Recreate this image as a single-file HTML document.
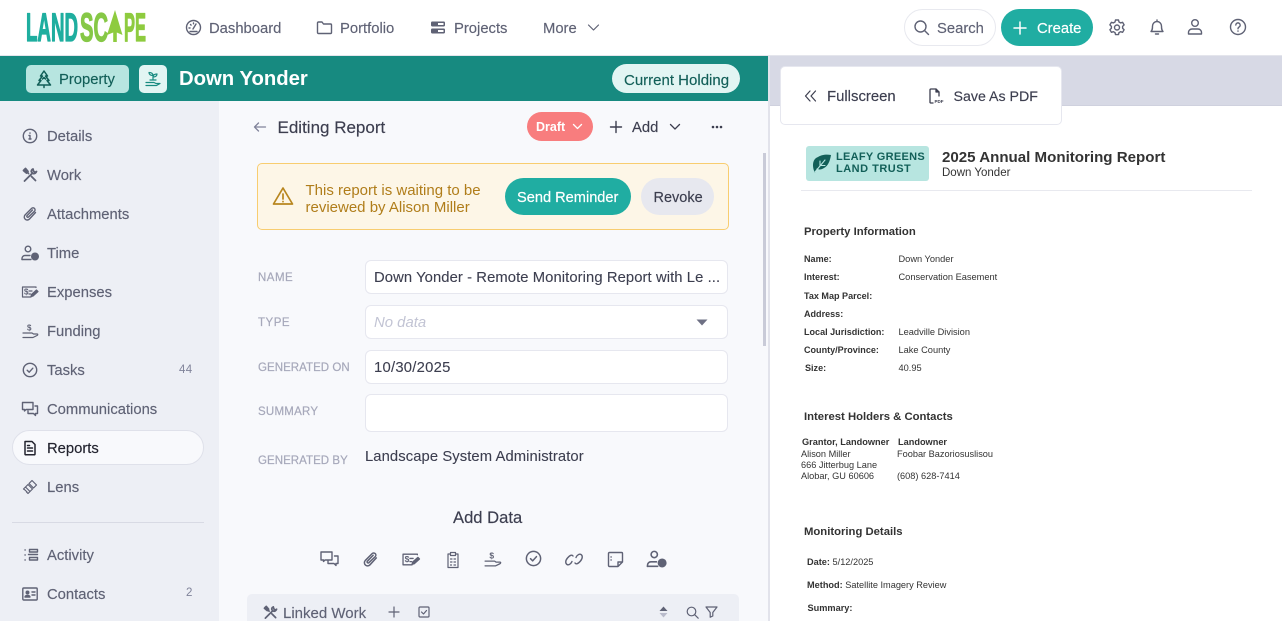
<!DOCTYPE html>
<html lang="en"><head><meta charset="utf-8"><title>Down Yonder - Editing Report</title>
<style>
html,body{margin:0;padding:0;width:1282px;height:621px;overflow:hidden;background:#fff;font-family:"Liberation Sans",Arial,sans-serif;}
#root{position:relative;width:1282px;height:621px;overflow:hidden;}
.b{position:absolute;box-sizing:border-box;}
.t{position:absolute;white-space:nowrap;line-height:1;margin-top:1px;}
svg{position:absolute;overflow:visible;fill:none;stroke-linecap:round;stroke-linejoin:round;}
.nav{font-size:14.8px;color:#5f6275;-webkit-text-stroke:.15px #5f6275;}
.side{font-size:14.8px;color:#5f6275;left:47px;-webkit-text-stroke:.15px #5f6275;}
.lab{font-size:11.5px;color:#a6a8ba;left:258px;letter-spacing:.5px;-webkit-text-stroke:.2px #a6a8ba;}
.inp{position:absolute;left:365px;width:363px;background:#fff;border:1px solid #e6e7ef;border-radius:6px;box-sizing:border-box;}
.val{font-size:14.8px;color:#3c3e4f;left:374px;letter-spacing:.08px;-webkit-text-stroke:.1px #3c3e4f;}
.rk{font-size:9.05px;color:#333;font-weight:bold;left:804px;}
.rv{font-size:9.25px;color:#333;left:898.5px;}
.rh{font-size:11.3px;color:#333;font-weight:bold;left:804px;}
.ct{font-size:9.2px;color:#333;}
.s{stroke:#5f6275;stroke-width:1.4;}
</style></head><body><div id="root">

<!-- top nav -->
<div class="b" style="left:0;top:0;width:1282px;height:56px;background:#fff;border-bottom:1px solid #e4e5ec;"></div>
<svg style="left:0;top:0" width="170" height="55">
<text x="26" y="41" font-family="Liberation Sans" font-weight="bold" font-size="40" textLength="52" lengthAdjust="spacingAndGlyphs" fill="#1fae9f" stroke="#1fae9f" stroke-width="1.300">LAND</text>
<text x="80" y="41" font-family="Liberation Sans" font-weight="bold" font-size="40" textLength="28" lengthAdjust="spacingAndGlyphs" fill="#86c846" stroke="#86c846" stroke-width="1.300">SC</text>
<text x="124" y="41" font-family="Liberation Sans" font-weight="bold" font-size="40" textLength="22" lengthAdjust="spacingAndGlyphs" fill="#8ecb3f" stroke="#8ecb3f" stroke-width="1.300">PE</text>
<path d="M115 10L122.500 35 116.800 32.500V42H113.200V32.500L107 35z" fill="#8ecb3f"/>
</svg>

<svg class="s" style="left:185px;top:19px" width="17" height="17" viewBox="0 0 17 17"><circle cx="8.500" cy="8.500" r="7"/><path d="M8 10l3-5M4 9h1M5.500 5.500l.6.6M8.500 4v.8M12 12.500H5"/></svg>
<div class="t nav" style="left:209px;top:21px;">Dashboard</div>
<svg class="s" style="left:316px;top:19px" width="17" height="17" viewBox="0 0 17 17"><path d="M1.500 4a1 1 0 0 1 1-1H6l1.500 2h7a1 1 0 0 1 1 1v7.500a1 1 0 0 1-1 1h-12a1 1 0 0 1-1-1z"/></svg>
<div class="t nav" style="left:340px;top:21px;">Portfolio</div>
<svg style="left:430px;top:20px" width="16" height="15" viewBox="0 0 16 15"><rect x="1" y="1.500" width="14" height="5" rx="1.200" fill="#5f6275"/><rect x="1" y="8.500" width="14" height="5" rx="1.200" fill="#5f6275"/><rect x="8" y="3" width="5.500" height="2" fill="#fff"/><rect x="8" y="10" width="5.500" height="2" fill="#fff"/></svg>
<div class="t nav" style="left:454px;top:21px;">Projects</div>
<div class="t nav" style="left:543px;top:21px;">More</div>
<svg class="s" style="left:587px;top:23px;stroke-width:1.200" width="13" height="11" viewBox="0 0 13 11"><path d="M1.500 2l5 5 5-5"/></svg>

<div class="b" style="left:904px;top:9px;width:92px;height:37px;border:1px solid #e8e9ef;border-radius:19px;background:#fff;"></div>
<svg class="s" style="left:913px;top:19px" width="17" height="17" viewBox="0 0 17 17"><circle cx="7.500" cy="7.500" r="5.500"/><path d="M11.500 11.500l4 4"/></svg>
<div class="t nav" style="left:937px;top:21px;">Search</div>
<div class="b" style="left:1001px;top:9px;width:92px;height:37px;border-radius:19px;background:#20ada2;"></div>
<svg style="left:1012px;top:20px;stroke:#fff;stroke-width:1.500" width="16" height="16" viewBox="0 0 16 16"><path d="M8 2v12M2 8h12"/></svg>
<div class="t" style="left:1037px;top:21px;font-size:14.8px;color:#fff;-webkit-text-stroke:.2px #fff;">Create</div>
<svg class="s" style="left:1108px;top:18px" width="18" height="18" viewBox="0 0 18 18"><path d="M7.500 2h3l.5 2 1.600.9 2-.6 1.500 2.600-1.500 1.500v1.800l1.500 1.500-1.500 2.600-2-.6-1.600.9-.5 2h-3l-.5-2-1.600-.9-2 .6-1.500-2.600 1.500-1.500V8.400L1.900 6.900l1.500-2.600 2 .6L7 4z"/><circle cx="9" cy="9.500" r="2.500"/></svg>
<svg class="s" style="left:1148px;top:18px" width="18" height="18" viewBox="0 0 18 18"><path d="M3 13.500c1.500-1.500 1.500-3 1.500-5.500a4.500 4.500 0 0 1 9 0c0 2.500 0 4 1.500 5.500zM7.500 16h3M9 2v1"/></svg>
<svg class="s" style="left:1186px;top:18px" width="18" height="18" viewBox="0 0 18 18"><circle cx="9" cy="5" r="3.300"/><path d="M2.500 16v-1.500a3.500 3.500 0 0 1 3.500-3.500h6a3.500 3.500 0 0 1 3.500 3.500V16z"/></svg>
<svg class="s" style="left:1229px;top:18px" width="18" height="18" viewBox="0 0 18 18"><circle cx="9" cy="9" r="7.500"/><path d="M6.800 7a2.200 2.200 0 1 1 3.300 2c-.8.500-1.100.9-1.100 1.800M9 13v.2"/></svg>

<!-- teal bar -->
<div class="b" style="left:0;top:56px;width:768px;height:45px;background:#178a80;"></div>
<div class="b" style="left:26px;top:65px;width:103px;height:28px;background:#b7e5e0;border-radius:5px;"></div>
<svg style="left:35px;top:70px;stroke:#125f58;stroke-width:1.500" width="18" height="18" viewBox="0 0 18 18"><path d="M9 1L5.500 6h2L4 10.500h2L2.500 15h13L12 10.500h2L10.500 6h2zM9 15v2.500M7.500 9l1.500-1.500L10.500 9"/></svg>
<div class="t" style="left:59px;top:71.500px;font-size:14.800px;color:#125f58;-webkit-text-stroke:.15px #125f58;">Property</div>
<div class="b" style="left:139px;top:65px;width:28px;height:28px;background:#e2f5f3;border-radius:5px;"></div>
<svg style="left:144px;top:70px;stroke:#178a80;stroke-width:1.200" width="18" height="18" viewBox="0 0 18 18"><path d="M9 10V5.500M9 5.500C9 3.500 7.500 2.500 5 2.500 5 4.500 6.500 5.500 9 5.500zM9 7c0-2 1.500-3 4-3 0 2-1.500 3-4 3zM6 10h6M2 12.500h8l2 1h3.500M2 15.500h10.500l3.500-2"/></svg>
<div class="t" style="left:179px;top:68px;font-size:20.300px;font-weight:bold;color:#fff;">Down Yonder</div>
<div class="b" style="left:612px;top:64px;width:128px;height:29px;background:#e2f5f3;border-radius:15px;"></div>
<div class="t" style="left:624px;top:71.500px;font-size:15px;color:#125f58;-webkit-text-stroke:.15px #125f58;">Current Holding</div>

<!-- sidebar -->
<div class="b" style="left:0;top:101px;width:219px;height:520px;background:#edeff5;"></div>
<div class="b" style="left:219px;top:101px;width:549px;height:520px;background:#f8f9fc;"></div>

<svg class="s" style="left:22px;top:128px" width="16" height="16" viewBox="0 0 16 16"><circle cx="8" cy="8" r="6.700"/><path d="M8 7.500v3.500M8 5v.2M7 7.500h1M7 11h2"/></svg>
<div class="t side" style="top:129px;">Details</div>
<svg style="left:22px;top:167px;stroke:#5f6275;stroke-width:1.800" width="16" height="16" viewBox="0 0 16 16"><path d="M2.500 2.500l4 4M9.500 9.500l4 4M2.500 14l7.500-7.500M11 2c-1.500.5-2 2-1.500 3l1.500 1.500c1.500.5 3-.5 3.500-2L13 5.500 11.500 4z"/><path d="M1.500 3.500l2-2 2.500 3-1.500 1.500z" fill="#5f6275"/></svg>
<div class="t side" style="top:168px;">Work</div>
<svg class="s" style="left:22px;top:206px" width="16" height="16" viewBox="0 0 16 16"><path d="M13.500 6.500l-6 6.500a3 3 0 0 1-4.500-4l6.500-6.500a2 2 0 0 1 3 2.800L6.500 11a1 1 0 0 1-1.500-1.300L10.500 4"/></svg>
<div class="t side" style="top:207px;">Attachments</div>
<svg class="s" style="left:21px;top:245px" width="18" height="16" viewBox="0 0 18 16"><circle cx="7" cy="4" r="2.800"/><path d="M1 14.500v-1a3 3 0 0 1 3-3h5"/><path d="M1 14.500h9"/><circle cx="14" cy="11.500" r="3.300" fill="#5f6275"/></svg>
<div class="t side" style="top:246px;">Time</div>
<svg class="s" style="left:21px;top:284px;stroke-width:1.200" width="18" height="16" viewBox="0 0 18 16"><path d="M15 3.500V3H1.500v10H10M11 7H8M9.500 10H8"/><path d="M15.500 6l1.500 1.500-5 4.500-2 .5.500-2z" fill="#5f6275"/><text x="3" y="10.500" font-size="8" font-family="Liberation Sans" font-weight="bold" fill="#5f6275" stroke="none">$</text></svg>
<div class="t side" style="top:285px;">Expenses</div>
<svg class="s" style="left:21px;top:323px;stroke-width:1.200" width="18" height="16" viewBox="0 0 18 16"><text x="6" y="7.500" font-size="8" font-family="Liberation Sans" font-weight="bold" fill="#5f6275" stroke="none">$</text><path d="M2 10h9l1.500 1H16c1 0 1 1 0 1.500L12 14.500H2"/></svg>
<div class="t side" style="top:324px;">Funding</div>
<svg class="s" style="left:22px;top:362px" width="16" height="16" viewBox="0 0 16 16"><circle cx="8" cy="8" r="6.700"/><path d="M5.200 8.200l2 2 3.600-4"/></svg>
<div class="t side" style="top:363px;">Tasks</div>
<div class="t" style="left:179px;top:364px;font-size:11.500px;color:#80839a;letter-spacing:.4px;">44</div>
<svg class="s" style="left:21px;top:401px" width="18" height="16" viewBox="0 0 18 16"><path d="M1.500 1.500h10.500v7H5l-1.500 1.500V8.500h-2zM14 5h2.500v7.500h-2v2L12.500 12.500H7V10"/></svg>
<div class="t side" style="top:402px;">Communications</div>

<div class="b" style="left:12px;top:430px;width:192px;height:35px;background:#f8f9fc;border:1px solid #dfe1ea;border-radius:18px;"></div>
<svg style="left:22px;top:440px;stroke:#23242f;stroke-width:1.500" width="16" height="16" viewBox="0 0 16 16"><path d="M3 1.500h7l3 3V14a.8.800 0 0 1-.8.800H3.800A.8.800 0 0 1 3 14zM5.500 8h5M5.500 11h5M5.500 5.500h2"/></svg>
<div class="t" style="left:47px;top:441px;font-size:14.8px;color:#23242f;-webkit-text-stroke:.15px #23242f;">Reports</div>

<svg class="s" style="left:22px;top:479px;stroke-width:1.200" width="16" height="16" viewBox="0 0 16 16"><path d="M10 1.500l4.500 4.500-3 3-4.500-4.500zM6 5.500l4.500 4.500-2.500 2.500L3.500 8zM3.500 8l-2 2 1.500 1M8 12.500l-2 2-1.500-1.500M3 11l2 2"/></svg>
<div class="t side" style="top:480px;">Lens</div>
<div class="b" style="left:12px;top:522px;width:192px;height:1px;background:#d8dae4;"></div>
<svg class="s" style="left:23px;top:548px" width="16" height="14" viewBox="0 0 16 14"><path d="M2 2h.2M2 7h.2M2 12h.2M6.500 1.500h8v2.500h-8zM5.500 6.500h9M6.500 9.500h8v2.500h-8z"/></svg>
<div class="t side" style="top:548px;">Activity</div>
<svg class="s" style="left:22px;top:587px" width="16" height="14" viewBox="0 0 16 14"><rect x=".8" y="1" width="14.400" height="12" rx="1"/><circle cx="5.500" cy="5.500" r="1.300" fill="#5f6275"/><path d="M3 10c.5-2 4.500-2 5 0zM10 5h3M10 8h3"/></svg>
<div class="t side" style="top:587px;">Contacts</div>
<div class="t" style="left:186px;top:587px;font-size:11.500px;color:#80839a;">2</div>

<!-- main head -->
<svg style="left:253px;top:121px;stroke:#80839a;stroke-width:1.300" width="14" height="12" viewBox="0 0 14 12"><path d="M12.500 6h-11M5.500 2L1.500 6l4 4"/></svg>
<div class="t" style="left:277.500px;top:118px;font-size:17px;color:#3c3e4f;-webkit-text-stroke:.15px #3c3e4f;">Editing Report</div>
<div class="b" style="left:527px;top:112px;width:66px;height:29px;background:#f87d7e;border-radius:15px;"></div>
<div class="t" style="left:536px;top:120px;font-size:12.500px;font-weight:bold;color:#fff;">Draft</div>
<svg style="left:572px;top:122px;stroke:#fff;stroke-width:1.300" width="11" height="9" viewBox="0 0 11 9"><path d="M1.500 2.500l4 4 4-4"/></svg>
<svg style="left:609px;top:120px;stroke:#3c3e4f;stroke-width:1.400" width="14" height="14" viewBox="0 0 14 14"><path d="M7 1.500v11M1.500 7h11"/></svg>
<div class="t" style="left:632px;top:119.500px;font-size:14.800px;color:#3c3e4f;-webkit-text-stroke:.15px #3c3e4f;">Add</div>
<svg style="left:669px;top:122px;stroke:#3c3e4f;stroke-width:1.300" width="12" height="10" viewBox="0 0 12 10"><path d="M1.500 2.500l4.500 4.500 4.500-4.500"/></svg>
<svg style="left:711px;top:125px" width="13" height="4" viewBox="0 0 13 4"><circle cx="2" cy="2" r="1.300" fill="#3c3e4f"/><circle cx="6" cy="2" r="1.300" fill="#3c3e4f"/><circle cx="10" cy="2" r="1.300" fill="#3c3e4f"/></svg>

<!-- alert -->
<div class="b" style="left:257px;top:163px;width:472px;height:67px;background:#fdf6e7;border:1px solid #f8cd70;border-radius:5px;"></div>
<svg style="left:271.500px;top:186px;stroke:#b8861f;stroke-width:1.700" width="22" height="20" viewBox="0 0 22 20"><path d="M11 2L1.500 18h19zM11 8v5M11 15.500v.2"/></svg>
<div class="t" style="left:305.500px;top:181.500px;font-size:15px;color:#b07d1a;">This report is waiting to be</div>
<div class="t" style="left:305.500px;top:198.500px;font-size:15px;color:#b07d1a;">reviewed by Alison Miller</div>
<div class="b" style="left:505px;top:178px;width:126px;height:37px;background:#20ada2;border-radius:19px;"></div>
<div class="t" style="left:517px;top:190px;font-size:14.600px;color:#fff;-webkit-text-stroke:.2px #fff;">Send Reminder</div>
<div class="b" style="left:641px;top:178px;width:73px;height:37px;background:#e7e8ef;border-radius:19px;"></div>
<div class="t" style="left:653.500px;top:190px;font-size:14.500px;color:#3c3e4f;-webkit-text-stroke:.15px #3c3e4f;">Revoke</div>

<!-- scrollbar -->
<div class="b" style="left:763px;top:153px;width:3px;height:193px;background:#c9cbd8;"></div>

<!-- form -->
<div class="t lab" style="top:271.500px;">NAME</div>
<div class="inp" style="top:260px;height:34px;"></div>
<div class="t val" style="top:269.500px;">Down Yonder - Remote Monitoring Report with Le ...</div>
<div class="t lab" style="top:316.500px;">TYPE</div>
<div class="inp" style="top:305px;height:34px;"></div>
<div class="t" style="left:374px;top:314.500px;font-size:14.900px;font-style:italic;color:#c2c4d4;">No data</div>
<svg style="left:696px;top:319px" width="12" height="7" viewBox="0 0 12 7"><path d="M.500 .500h11L6 6.500z" fill="#6e7084"/></svg>
<div class="t lab" style="top:361.500px;letter-spacing:.05px;">GENERATED ON</div>
<div class="inp" style="top:350px;height:34px;"></div>
<div class="t val" style="top:359.500px;letter-spacing:.25px;">10/30/2025</div>
<div class="t lab" style="top:405.500px;letter-spacing:.25px;">SUMMARY</div>
<div class="inp" style="top:394px;height:38px;"></div>
<div class="t lab" style="top:454.500px;letter-spacing:.05px;">GENERATED BY</div>
<div class="t val" style="left:365px;top:448.500px;">Landscape System Administrator</div>

<div class="t" style="left:453px;top:509px;font-size:16.600px;color:#3c3e4f;-webkit-text-stroke:.15px #3c3e4f;">Add Data</div>

<!-- add data icons -->
<svg class="s" style="left:320px;top:551px" width="19" height="16" viewBox="0 0 19 16"><path d="M1 1h11v8H5l-1.500 1.500V9H1zM14.500 5H18v7.500h-2v2L14 12.500H8V9.500"/></svg>
<svg class="s" style="left:362px;top:551px" width="17" height="17" viewBox="0 0 16 16"><path d="M13.500 6.500l-6 6.500a3 3 0 0 1-4.500-4l6.500-6.500a2 2 0 0 1 3 2.800L6.500 11a1 1 0 0 1-1.500-1.300L10.500 4"/></svg>
<svg class="s" style="left:401px;top:551px;stroke-width:1.200" width="20" height="17" viewBox="0 0 18 16"><path d="M15 3.500V3H1.500v10H10M11 7H8M9.500 10H8"/><path d="M15.500 6l1.500 1.500-5 4.500-2 .5.500-2z" fill="#5f6275"/><text x="3" y="10.500" font-size="8" font-family="Liberation Sans" font-weight="bold" fill="#5f6275" stroke="none">$</text></svg>
<svg class="s" style="left:445px;top:551px;stroke-width:1.200" width="16" height="18" viewBox="0 0 16 18"><path d="M5 3H3v13.500h10V3h-2M5.500 1.500h5v3h-5zM5.500 8h1.500M9 8h1.500M5.500 11h1.500M9 11h1.500M5.500 14h1M9 14h1.500"/></svg>
<svg class="s" style="left:483px;top:550px;stroke-width:1.200" width="19" height="18" viewBox="0 0 18 16"><text x="6" y="7.500" font-size="8" font-family="Liberation Sans" font-weight="bold" fill="#5f6275" stroke="none">$</text><path d="M2 10h9l1.500 1H16c1 0 1 1 0 1.500L12 14.500H2"/></svg>
<svg class="s" style="left:525px;top:550px" width="17" height="17" viewBox="0 0 16 16"><circle cx="8" cy="8" r="6.700"/><path d="M5.200 8.200l2 2 3.600-4"/></svg>
<svg class="s" style="left:564px;top:551px" width="20" height="17" viewBox="0 0 20 17"><path d="M8 10.500c-1 2.500-3.500 4-5 3S1 10 3.500 7 8 3.500 9 5M12 6.500c1-2.500 3.500-4 5-3s2 3.500-.5 6.500-4.500 3.500-5.500 2"/></svg>
<svg class="s" style="left:607px;top:551px" width="17" height="17" viewBox="0 0 17 17"><path d="M2.500 1.500h12a1 1 0 0 1 1 1V11l-4.500 4.500H2.500a1 1 0 0 1-1-1v-12a1 1 0 0 1 1-1zM11 15.500V11h4.500M4 6h.2M4 9h.2"/></svg>
<svg class="s" style="left:646px;top:550px" width="21" height="18" viewBox="0 0 18 16"><circle cx="7" cy="4" r="2.800"/><path d="M1 14.500v-1a3 3 0 0 1 3-3h5"/><path d="M1 14.500h9"/><circle cx="14" cy="11.500" r="3.300" fill="#5f6275"/></svg>

<!-- linked work -->
<div class="b" style="left:247px;top:594px;width:492px;height:27px;background:#edeff5;border-radius:5px 5px 0 0;"></div>
<svg style="left:263px;top:605px;stroke:#5f6275;stroke-width:1.800" width="15" height="15" viewBox="0 0 16 16"><path d="M2.500 2.500l4 4M9.500 9.500l4 4M2.500 14l7.500-7.500M11 2c-1.500.5-2 2-1.500 3l1.500 1.500c1.500.5 3-.5 3.500-2L13 5.500 11.500 4z"/><path d="M1.500 3.500l2-2 2.500 3-1.500 1.500z" fill="#5f6275"/></svg>
<div class="t" style="left:283px;top:604.500px;font-size:15px;color:#5f6275;-webkit-text-stroke:.15px #5f6275;">Linked Work</div>
<svg class="s" style="left:388px;top:606px;stroke-width:1.200" width="12" height="12" viewBox="0 0 12 12"><path d="M6 1v10M1 6h10"/></svg>
<svg class="s" style="left:418px;top:606px;stroke-width:1.200" width="12" height="12" viewBox="0 0 12 12"><rect x="1" y="1" width="10" height="10" rx="1"/><path d="M3.500 6l2 2 3-3.500"/></svg>
<svg style="left:659px;top:606px" width="9" height="12" viewBox="0 0 9 12"><path d="M4.500 .5L8.500 5h-8z" fill="#5f6275"/><path d="M4.500 11.500L8.500 7h-8z" fill="#b9bbcb"/></svg>
<svg class="s" style="left:686px;top:606px;stroke-width:1.200" width="13" height="13" viewBox="0 0 13 13"><circle cx="5.500" cy="5.500" r="4.300"/><path d="M8.700 8.700l3.500 3.500"/></svg>
<svg class="s" style="left:705px;top:606px;stroke-width:1.200" width="13" height="12" viewBox="0 0 13 12"><path d="M1 1h11L7.800 6.500v3.500l-2.600 1.200V6.500z"/></svg>

<!-- right panel -->
<div class="b" style="left:768px;top:56px;width:514px;height:565px;background:#fff;border-left:2px solid #e2e3eb;"></div>
<div class="b" style="left:770px;top:56px;width:512px;height:50px;background:#d7d9e5;border-bottom:1px solid #cfd1de;"></div>
<div class="b" style="left:780px;top:66px;width:282px;height:59px;background:#fff;border:1px solid #e6e7ef;border-radius:5px;"></div>
<svg style="left:804px;top:90px;stroke:#3c3e4f;stroke-width:1.200" width="13" height="12" viewBox="0 0 13 12"><path d="M6 1L1.500 6 6 11M11.500 1L7 6l4.500 5"/></svg>
<div class="t" style="left:827px;top:88.500px;font-size:14.900px;color:#3c3e4f;-webkit-text-stroke:.15px #3c3e4f;">Fullscreen</div>
<svg style="left:928px;top:88px;stroke:#3c3e4f;stroke-width:1.300" width="16" height="16" viewBox="0 0 16 16"><path d="M2 14.500V2a1 1 0 0 1 1-1h5l3 3v4M5 15H3a1 1 0 0 1-1-.5"/><path d="M8 1v3h3" fill="#3c3e4f"/></svg>
<div class="t" style="left:934.500px;top:98.500px;font-size:4.500px;font-weight:bold;color:#3c3e4f;">PDF</div>
<div class="t" style="left:953.500px;top:88.500px;font-size:14.200px;color:#3c3e4f;-webkit-text-stroke:.15px #3c3e4f;">Save As PDF</div>

<!-- report -->
<div class="b" style="left:806px;top:146px;width:123px;height:35px;background:#b7e5e0;border-radius:3px;"></div>
<svg style="left:811px;top:153px" width="21" height="21" viewBox="0 0 21 21"><path d="M4 20C1 14 1 6 7 4c3-2 8-3 13-2-1 6-3 11-7 13-3 2-6 2-7 0z" fill="#125f58"/><path d="M4 19L14 7M9 12.500V8M9 12.500h5" stroke="#b7e5e0" stroke-width="1.100"/></svg>
<div class="t" style="left:836px;top:151px;font-size:11px;font-weight:bold;color:#125f58;letter-spacing:.3px;">LEAFY GREENS</div>
<div class="t" style="left:836px;top:163px;font-size:11px;font-weight:bold;color:#125f58;letter-spacing:.5px;">LAND TRUST</div>
<div class="t" style="left:942px;top:148.500px;font-size:15.100px;font-weight:bold;color:#333;">2025 Annual Monitoring Report</div>
<div class="t" style="left:942px;top:166.500px;font-size:11.500px;color:#333;">Down Yonder</div>
<div class="b" style="left:801px;top:190px;width:451px;height:1px;background:#e8e9ef;"></div>

<div class="t rh" style="top:225.500px;">Property Information</div>
<div class="t rk" style="top:253.500px;">Name:</div><div class="t rv" style="top:253.500px;">Down Yonder</div>
<div class="t rk" style="top:271.500px;">Interest:</div><div class="t rv" style="top:271.500px;">Conservation Easement</div>
<div class="t rk" style="top:290.500px;">Tax Map Parcel:</div>
<div class="t rk" style="top:308.500px;">Address:</div>
<div class="t rk" style="top:326.500px;">Local Jurisdiction:</div><div class="t rv" style="top:326.500px;">Leadville Division</div>
<div class="t rk" style="top:344.500px;">County/Province:</div><div class="t rv" style="top:344.500px;">Lake County</div>
<div class="t rk" style="top:362.500px;left:805px;">Size:</div><div class="t rv" style="top:362.500px;">40.95</div>

<div class="t rh" style="top:410.500px;">Interest Holders &amp; Contacts</div>
<div class="t ct" style="left:802px;top:436.500px;font-weight:bold;">Grantor, Landowner</div>
<div class="t ct" style="left:898px;top:436.500px;font-weight:bold;">Landowner</div>
<div class="t ct" style="left:801px;top:448.500px;">Alison Miller</div>
<div class="t ct" style="left:801px;top:459.500px;">666 Jitterbug Lane</div>
<div class="t ct" style="left:801px;top:470.500px;">Alobar, GU 60606</div>
<div class="t ct" style="left:897px;top:448.500px;">Foobar Bazoriosuslisou</div>
<div class="t ct" style="left:897px;top:470.500px;">(608) 628-7414</div>

<div class="t rh" style="top:525.500px;">Monitoring Details</div>
<div class="t ct" style="left:807px;top:556.500px;"><b>Date:</b> 5/12/2025</div>
<div class="t ct" style="left:807px;top:579.500px;"><b>Method:</b> Satellite Imagery Review</div>
<div class="t ct" style="left:807.500px;top:602.500px;"><b>Summary:</b></div>

</div></body></html>
